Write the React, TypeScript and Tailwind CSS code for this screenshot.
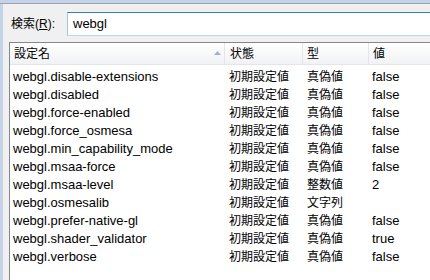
const rows = [
  ['webgl.disable-extensions', '初期設定値', '真偽値', 'false'],
  ['webgl.disabled', '初期設定値', '真偽値', 'false'],
  ['webgl.force-enabled', '初期設定値', '真偽値', 'false'],
  ['webgl.force_osmesa', '初期設定値', '真偽値', 'false'],
  ['webgl.min_capability_mode', '初期設定値', '真偽値', 'false'],
  ['webgl.msaa-force', '初期設定値', '真偽値', 'false'],
  ['webgl.msaa-level', '初期設定値', '整数値', '2'],
  ['webgl.osmesalib', '初期設定値', '文字列', ''],
  ['webgl.prefer-native-gl', '初期設定値', '真偽値', 'false'],
  ['webgl.shader_validator', '初期設定値', '真偽値', 'true'],
  ['webgl.verbose', '初期設定値', '真偽値', 'false'],
]

export default function App() {
  return (
    <div
      className="w-[430px] h-[280px] overflow-hidden bg-[#f0f0f0] flex flex-col text-[12px] text-black"
      style={{ fontFamily: '"Liberation Sans", "Noto Sans CJK JP", sans-serif' }}
    >
      <div className="h-[4px] bg-[#c4d3e7] border-b border-[#9aa3ae] shrink-0" />
      <div className="flex flex-1 min-h-0">
        <div className="w-[3px] bg-[#c4d3e7] shrink-0" />
        <div className="flex-1 flex flex-col pl-[6px] min-w-0">
          {/* search row */}
          <div className="flex items-center h-[24px] mt-[8px]">
            <span className="ml-[2px] w-[56px] shrink-0 leading-none">
              検索(<span className="underline">R</span>):
            </span>
            <div className="flex-1 h-[24px] bg-white border-t border-l border-t-[#3d7bad] border-l-[#a4c4de] border-b border-b-[#b5d8f3] flex items-center pl-[5px] -mr-[10px] text-[13px]">
              webgl
            </div>
          </div>
          {/* table */}
          <div className="mt-[6px] flex-1 bg-white border-l border-t border-[#828790] -mr-[10px]">
            <div className="flex h-[22px] items-center bg-gradient-to-b from-white to-[#f1f2f4] border-b border-[#e3e5e8]">
              <div className="w-[215px] pl-[4px] flex items-center justify-between pr-[3px] h-full border-r border-[#e3e5e8]">
                <span>設定名</span>
                <svg width="7" height="4" viewBox="0 0 7 4" className="mb-[2px]">
                  <path d="M0 4 L3.5 0 L7 4 Z" fill="#9ab4cc" />
                </svg>
              </div>
              <div className="w-[78px] pl-[5px] h-full flex items-center border-r border-[#e3e5e8]">状態</div>
              <div className="w-[66px] pl-[4px] h-full flex items-center border-r border-[#e3e5e8]">型</div>
              <div className="flex-1 pl-[4px] h-full flex items-center">値</div>
            </div>
            <div className="pt-[3px]">
              {rows.map((r, i) => (
                <div key={i} className="flex h-[18px] items-center">
                  <div className="w-[216px] pl-[3px] whitespace-nowrap text-[13px]">{r[0]}</div>
                  <div className="w-[78px] pl-[3px]">{r[1]}</div>
                  <div className="w-[66px] pl-[3px]">{r[2]}</div>
                  <div className="flex-1 pl-[2px] text-[13px]">{r[3]}</div>
                </div>
              ))}
            </div>
          </div>
        </div>
      </div>
    </div>
  )
}
